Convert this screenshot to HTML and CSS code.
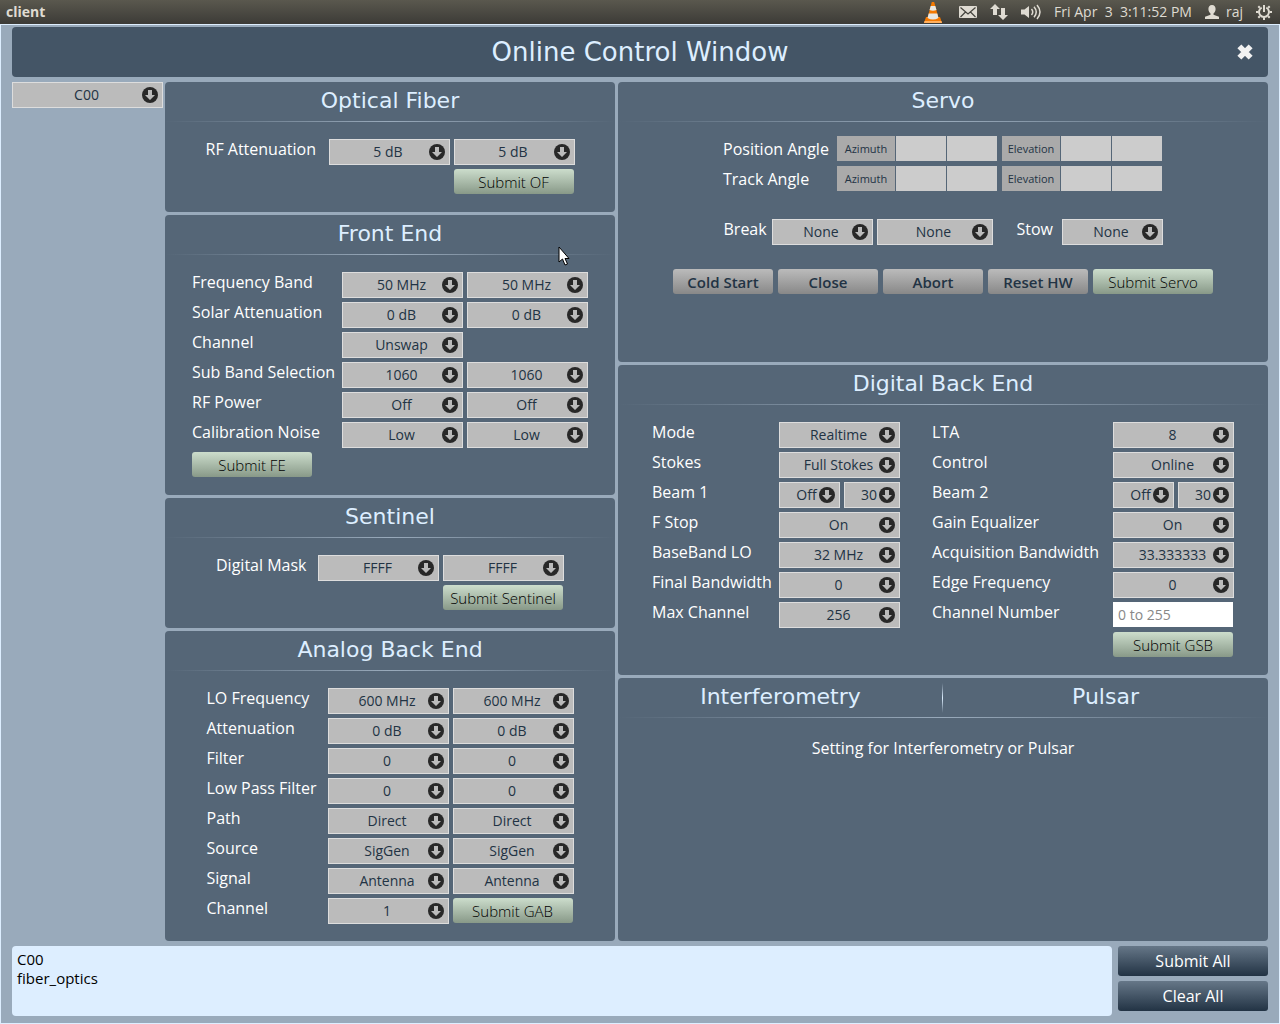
FILE: index.html
```html
<!DOCTYPE html>
<html lang="en">
<head>
<meta charset="utf-8">
<title>client</title>
<link rel="stylesheet" href="styles.css">
</head>
<body>
<header class="menubar">
  <strong class="app-name">client</strong>
  <div class="tray">
    <svg width="20" height="22" viewBox="0 0 20 22" role="img" aria-label="VLC"><path d="M3 16h14l2 6H1z" fill="#f57900"/><path d="M1.500 20h17l.5 2H1z" fill="#ffb060"/><path d="M8.800 1h2.400l4.300 16q-5.500 3-11 0z" fill="#f57900"/><path d="M7.700 5h4.600l1.200 4q-3.500 1.500-7 0zM5.700 12.500h8.600l1.200 4.500q-5.500 3-11 0z" fill="#e8e8e4"/></svg>
    <svg width="18" height="12" viewBox="0 0 18 12" role="img" aria-label="Mail"><rect width="18" height="12" rx="1" fill="#dfdbd2"/><path d="M1.500 1.500 9 8l7.500-6.500M1.500 11l5-5M16.500 11l-5-5" fill="none" stroke="#45443e" stroke-width="1.200"/></svg>
    <svg width="18" height="16" viewBox="0 0 18 16" role="img" aria-label="Network"><path d="M5 0 10 5H7v6H3V5H0zM13 16 8 11h3V4h4v7h3z" fill="#dfdbd2"/></svg>
    <svg width="20" height="16" viewBox="0 0 20 16" role="img" aria-label="Volume"><path d="M0 5.500h3.500L8 2v12l-4.500-3.500H0z" fill="#dfdbd2"/><path d="M10.500 5q2.500 3 0 6M13 2.800q4.500 5.200 0 10.400M16 1q6 7 0 14" fill="none" stroke="#dfdbd2" stroke-width="1.500"/></svg>
    <time>Fri Apr &nbsp;3 &nbsp;3:11:52 PM</time>
    <span class="user"><svg width="14" height="14" viewBox="0 0 14 14" aria-hidden="true"><path d="M7 0c2.500 0 3.600 1.700 3.600 4S9.500 7.600 8.500 8.600v1.200l5.500 2V14H0v-2.200l5.500-2V8.600C4.500 7.600 3.400 6.300 3.400 4S4.500 0 7 0z" fill="#dfdbd2"/></svg>raj</span>
    <svg width="16" height="16" viewBox="0 0 16 16" role="img" aria-label="Session"><g fill="none" stroke="#dfdbd2"><path d="M5.700 3.600a5 5 0 1 0 4.600 0" stroke-width="2"/><path d="M8 1v7" stroke-width="2"/><path d="M3.800 3.800 2.300 2.300M12.200 3.800l1.500-1.500M2.500 8H0M16 8h-2.500M3.800 12.200l-1.500 1.500M12.200 12.200l1.500 1.500M8 13.500V16" stroke-width="2"/></g></svg>
  </div>
</header>

<main class="window">
  <div class="titlebar">
    <h1>Online Control Window</h1>
    <button class="close" type="button" aria-label="Close window"><svg width="18" height="18" viewBox="0 0 16 16" aria-hidden="true"><path d="M3 3l10 10M13 3 3 13" stroke="#f2f2f2" stroke-width="5"/></svg></button>
  </div>

  <div class="board">
    <aside><select class="wide" aria-label="Antenna"><option>C00</option></select></aside>

    <div class="column">
      <section class="panel">
        <h2>Optical Fiber</h2>
        <form class="fields fiber">
          <label for="of-att">RF Attenuation</label>
          <select id="of-att"><option>5 dB</option></select>
          <select aria-label="RF Attenuation 2"><option>5 dB</option></select>
          <button class="submit last" type="button">Submit OF</button>
        </form>
      </section>

      <section class="panel">
        <h2>Front End</h2>
        <form class="fields front">
          <label for="fe-band">Frequency Band</label>
          <select id="fe-band"><option>50 MHz</option></select>
          <select aria-label="Frequency Band 2"><option>50 MHz</option></select>
          <label for="fe-solar">Solar Attenuation</label>
          <select id="fe-solar"><option>0 dB</option></select>
          <select aria-label="Solar Attenuation 2"><option>0 dB</option></select>
          <label for="fe-chan">Channel</label>
          <select id="fe-chan"><option>Unswap</option></select>
          <label class="first" for="fe-sub">Sub Band Selection</label>
          <select id="fe-sub"><option>1060</option></select>
          <select aria-label="Sub Band Selection 2"><option>1060</option></select>
          <label for="fe-rf">RF Power</label>
          <select id="fe-rf"><option>Off</option></select>
          <select aria-label="RF Power 2"><option>Off</option></select>
          <label for="fe-cal">Calibration Noise</label>
          <select id="fe-cal"><option>Low</option></select>
          <select aria-label="Calibration Noise 2"><option>Low</option></select>
          <button class="submit first" type="button">Submit FE</button>
        </form>
      </section>

      <section class="panel">
        <h2>Sentinel</h2>
        <form class="fields sentinel">
          <label for="se-mask">Digital Mask</label>
          <select id="se-mask"><option>FFFF</option></select>
          <select aria-label="Digital Mask 2"><option>FFFF</option></select>
          <button class="submit last" type="button">Submit Sentinel</button>
        </form>
      </section>

      <section class="panel">
        <h2>Analog Back End</h2>
        <form class="fields analog">
          <label for="ab-lo">LO Frequency</label>
          <select id="ab-lo"><option>600 MHz</option></select>
          <select aria-label="LO Frequency 2"><option>600 MHz</option></select>
          <label for="ab-att">Attenuation</label>
          <select id="ab-att"><option>0 dB</option></select>
          <select aria-label="Attenuation 2"><option>0 dB</option></select>
          <label for="ab-fil">Filter</label>
          <select id="ab-fil"><option>0</option></select>
          <select aria-label="Filter 2"><option>0</option></select>
          <label for="ab-lpf">Low Pass Filter</label>
          <select id="ab-lpf"><option>0</option></select>
          <select aria-label="Low Pass Filter 2"><option>0</option></select>
          <label for="ab-path">Path</label>
          <select id="ab-path"><option>Direct</option></select>
          <select aria-label="Path 2"><option>Direct</option></select>
          <label for="ab-src">Source</label>
          <select id="ab-src"><option>SigGen</option></select>
          <select aria-label="Source 2"><option>SigGen</option></select>
          <label for="ab-sig">Signal</label>
          <select id="ab-sig"><option>Antenna</option></select>
          <select aria-label="Signal 2"><option>Antenna</option></select>
          <label for="ab-chan">Channel</label>
          <select id="ab-chan"><option>1</option></select>
          <button class="submit" type="button">Submit GAB</button>
        </form>
      </section>
    </div>

    <div class="column">
      <section class="panel servo">
        <h2>Servo</h2>
        <table class="angles">
          <tr><th scope="row">Position Angle</th><td class="axis">Azimuth</td><td></td><td></td><td class="axis second">Elevation</td><td></td><td></td></tr>
          <tr><th scope="row">Track Angle</th><td class="axis">Azimuth</td><td></td><td></td><td class="axis second">Elevation</td><td></td><td></td></tr>
        </table>
        <form class="servo-form">
          <div class="brakes">
            <label for="sv-break">Break</label>
            <select id="sv-break"><option>None</option></select>
            <select class="medium" aria-label="Break 2"><option>None</option></select>
            <label class="stow" for="sv-stow">Stow</label>
            <select id="sv-stow"><option>None</option></select>
          </div>
          <div class="actions">
            <button class="plain" type="button">Cold Start</button>
            <button class="plain" type="button">Close</button>
            <button class="plain" type="button">Abort</button>
            <button class="plain" type="button">Reset HW</button>
            <button class="submit" type="button">Submit Servo</button>
          </div>
        </form>
      </section>

      <section class="panel">
        <h2>Digital Back End</h2>
        <form class="fields digital">
          <label for="db-mode">Mode</label>
          <select id="db-mode"><option>Realtime</option></select>
          <label class="right" for="db-lta">LTA</label>
          <select id="db-lta"><option>8</option></select>
          <label for="db-stokes">Stokes</label>
          <select id="db-stokes"><option>Full Stokes</option></select>
          <label class="right" for="db-ctl">Control</label>
          <select id="db-ctl"><option>Online</option></select>
          <label for="db-b1">Beam 1</label>
          <div class="pair"><select id="db-b1"><option>Off</option></select><select aria-label="Beam 1 value"><option>30</option></select></div>
          <label class="right" for="db-b2">Beam 2</label>
          <div class="pair"><select id="db-b2"><option>Off</option></select><select aria-label="Beam 2 value"><option>30</option></select></div>
          <label for="db-fstop">F Stop</label>
          <select id="db-fstop"><option>On</option></select>
          <label class="right" for="db-gain">Gain Equalizer</label>
          <select id="db-gain"><option>On</option></select>
          <label for="db-bb">BaseBand LO</label>
          <select id="db-bb"><option>32 MHz</option></select>
          <label class="right" for="db-acq">Acquisition Bandwidth</label>
          <select id="db-acq"><option>33.333333</option></select>
          <label for="db-fin">Final Bandwidth</label>
          <select id="db-fin"><option>0</option></select>
          <label class="right" for="db-edge">Edge Frequency</label>
          <select id="db-edge"><option>0</option></select>
          <label for="db-max">Max Channel</label>
          <select id="db-max"><option>256</option></select>
          <label class="right" for="db-num">Channel Number</label>
          <input id="db-num" type="text" placeholder="0 to 255">
          <button class="submit last" type="button">Submit GSB</button>
        </form>
      </section>

      <section class="panel modes">
        <div class="tabs"><button type="button">Interferometry</button><button type="button">Pulsar</button></div>
        <p>Setting for Interferometry or Pulsar</p>
      </section>
    </div>
  </div>

  <footer>
    <textarea aria-label="Command log">C00
fiber_optics</textarea>
    <div class="commands">
      <button type="button">Submit All</button>
      <button type="button">Clear All</button>
    </div>
  </footer>
</main>

<svg class="cursor" width="12" height="20" viewBox="0 0 12 20" aria-hidden="true"><path d="M1 1v15l3.500-3 2.500 6 2.500-1-2.500-5.500H11z" fill="#fff" stroke="#000"/></svg>
</body>
</html>
```

FILE: styles.css
```css
* { box-sizing: border-box; }

body {
  margin: 0;
  min-height: 100vh;
  display: flex;
  flex-direction: column;
  font: 400 16px/20px "Open Sans", "Noto Sans", sans-serif;
  color: #fff;
  background: #9ab;
}

button, select, input, textarea { font: inherit; margin: 0; }
button { border: 0; padding: 0; }

/* desktop menu bar */
.menubar {
  height: 24px;
  padding: 0 8px 0 6px;
  display: flex;
  align-items: center;
  justify-content: space-between;
  background: linear-gradient(#5a584e, #3c3b37);
  color: #dfdbd2;
  font-size: 14px;
}
.app-name { font-weight: 700; }
.tray { display: flex; align-items: center; gap: 13px; }
.tray svg:first-child { margin-right: 3px; }
.user { display: flex; align-items: center; gap: 4px; }

/* application window */
.window {
  flex: 1;
  display: flex;
  flex-direction: column;
  gap: 5px;
  padding: 2px 11px 7px;
  border: 1px solid #def;
}
.titlebar {
  height: 50px;
  display: grid;
  grid-template-columns: 30px 1fr 30px;
  align-items: center;
  padding: 0 8px;
  border-radius: 4px;
  background: #456;
}
h1, h2 { margin: 0; font-family: "DejaVu Sans", sans-serif; font-weight: 400; color: #def; text-align: center; }
h1 { grid-column: 2; font-size: 26px; line-height: 50px; }
.close { background: none; height: 18px; }
.close svg { display: block; margin: auto; }

.board { flex: 1; display: grid; grid-template-columns: 150px 9fr 13fr; gap: 3px; }
.column { display: flex; flex-direction: column; gap: 3px; }

.panel { padding-bottom: 18px; border-radius: 4px; background: #567; }
h2, .tabs {
  height: 40px;
  margin-bottom: 17px;
  font-size: 22px;
  line-height: 37px;
  background: linear-gradient(90deg, transparent, #9ab, transparent) bottom / 100% 1px no-repeat;
}

/* form controls */
select {
  appearance: none;
  width: 121px;
  height: 26px;
  padding: 0 2px 0 0;
  border: 1px solid #ddd;
  border-radius: 0;
  color: #234;
  font-size: 14px;
  text-align: center;
  text-align-last: center;
  background: #bbb url("data:image/svg+xml,%3Csvg xmlns='http://www.w3.org/2000/svg' width='16' height='16'%3E%3Ccircle cx='8' cy='8' r='8' fill='%23282828'/%3E%3Cpath d='M6 3h4v5h3l-5 5-5-5h3z' fill='%23bbb'/%3E%3C/svg%3E") right 4px center no-repeat;
}
.wide { width: 151px; }
input {
  width: 120px;
  height: 25px;
  padding: 0 5px;
  border: 0;
  background: #fff;
  font-size: 14px;
}
input::placeholder { color: #888; }
.submit, .plain { height: 25px; border-radius: 3px; font-size: 15px; }
.submit { width: 120px; color: #000; font-weight: 350; background: linear-gradient(#cdc, #898); }
.plain {
  width: 100px;
  color: #234;
  font-weight: 600;
  background: linear-gradient(#bbb, #888);
}

.fields {
  display: grid;
  grid-auto-rows: 26px;
  gap: 4px;
  justify-content: center;
  margin-bottom: -1px;
}
.fiber { grid-template-columns: 119px 121px 121px; }
.front { grid-template-columns: 146px 121px 121px; }
.sentinel { grid-template-columns: 98px 121px 121px; }
.analog { grid-template-columns: 117px 121px 121px; }
.digital { grid-template-columns: 123px 121px 205px 121px; }
.fields label { white-space: nowrap; }
.first { grid-column: 1; }
.last { grid-column: -2; }
.right { padding-left: 28px; }
.pair { display: grid; grid-template-columns: 61px 56px; gap: 4px; }
.pair select { width: 100%; padding-right: 6px; }

/* servo */
.servo { min-height: 280px; }
.angles { margin: -3px auto 0; border-spacing: 0; }
.angles th { width: 114px; padding: 0; border-bottom: 5px solid #567; font-weight: 400; text-align: left; white-space: nowrap; }
.angles td {
  width: 51px;
  height: 30px;
  padding: 0;
  border-right: 1px solid #567;
  border-bottom: 5px solid #567;
  background: #ccc;
}
.angles .axis { width: 59px; background: #aaa; color: #234; font-size: 11px; text-align: center; }
.angles .second { width: 63px; border-left: 4px solid #567; }
.servo-form { display: grid; gap: 24px; margin-top: 23px; justify-content: center; }
.brakes { display: flex; justify-content: center; gap: 4px; }
.brakes select { width: 101px; }
.brakes .medium { width: 116px; }
.brakes label { width: 44px; }
.brakes .stow { width: 41px; margin-left: 20px; }
.actions { display: flex; gap: 5px; }

/* interferometry and pulsar */
.modes { flex: 1; }
.tabs { display: grid; grid-template-columns: 1fr 1fr; align-items: start; }
.tabs button { height: 37px; font: 22px/37px "DejaVu Sans", sans-serif; color: #def; background: none; }
.tabs button:first-child { background: linear-gradient(transparent, #def, transparent) right 5px / 1px 30px no-repeat; }
.modes p { margin: 20px 0 0; text-align: center; }

/* log and global commands */
footer { display: flex; gap: 6px; }
textarea {
  flex: 1;
  height: 70px;
  padding: 4px 5px;
  border: 0;
  border-radius: 4px;
  resize: none;
  background: #def;
  color: #000;
  font-size: 15px;
  line-height: 19px;
}
.commands { width: 150px; display: flex; flex-direction: column; gap: 5px; }
.commands button { height: 30px; border-radius: 3px; color: #fff; background: linear-gradient(#678, #234); }

/* mouse pointer over the page */
.cursor { position: absolute; left: 558px; top: 246px; }
```
